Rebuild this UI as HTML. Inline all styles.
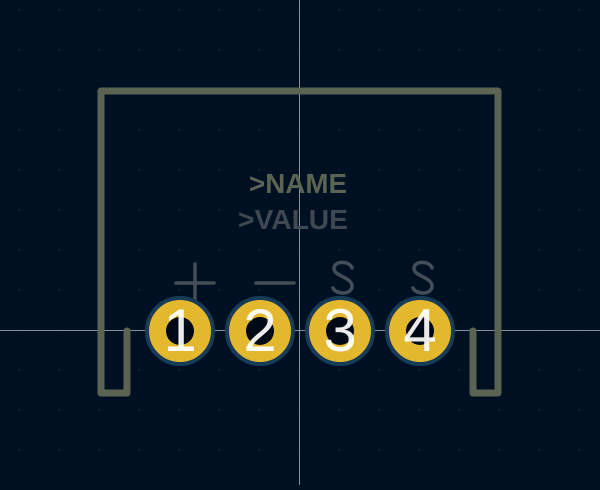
<!DOCTYPE html>
<html><head><style>html,body{margin:0;padding:0;background:#001023;overflow:hidden}</style></head>
<body>
<svg width="600" height="485" viewBox="0 0 600 485" xmlns="http://www.w3.org/2000/svg">
<defs>
<pattern id="g" x="0" y="0" width="40" height="40" patternUnits="userSpaceOnUse">
<rect x="18.5" y="9.5" width="1.2" height="1.2" fill="#2a3a4e"/>
</pattern>
</defs>
<rect width="600" height="485" fill="#001023"/>
<rect width="600" height="485" fill="url(#g)"/>
<line x1="299.5" y1="0" x2="299.5" y2="485" stroke="#8a909a" stroke-width="1"/>
<line x1="0" y1="330.5" x2="600" y2="330.5" stroke="#8a909a" stroke-width="1"/>
<g fill="none" stroke="#5b6352" stroke-width="7" stroke-linecap="round" stroke-linejoin="round">
<path d="M127 331 V393 H101 V91 H498 V393 H473 V331"/>
</g>
<g font-family="Liberation Sans, sans-serif" font-weight="bold" text-anchor="middle">
<text x="298" y="193" font-size="28" fill="#5b6352" textLength="98" lengthAdjust="spacingAndGlyphs">&gt;NAME</text>
<text x="293" y="229" font-size="28" fill="#3f4753" textLength="110" lengthAdjust="spacingAndGlyphs">&gt;VALUE</text>
</g>
<g stroke="#454d59" stroke-width="3.5" fill="none" stroke-linecap="round">
<path d="M176 283 H214 M195 264 V302"/>
<path d="M256 283 H294"/>
<path d="M352 268 C350 261 335 260 334 268 C333 276 352 277 352 286 C352 295 336 295 333 288"/>
<path d="M432 268 C430 261 415 260 414 268 C413 276 432 277 432 286 C432 295 416 295 413 288"/>
</g>
<g>
<g fill="#e3b82e" stroke="#183b58" stroke-width="4">
<circle cx="180" cy="331" r="33"/><circle cx="260" cy="331" r="33"/><circle cx="340" cy="331" r="33"/><circle cx="420" cy="331" r="33"/>
</g>
<g fill="#000a16">
<circle cx="180" cy="331" r="14"/><circle cx="260" cy="331" r="14"/><circle cx="340" cy="331" r="14"/><circle cx="420" cy="331" r="14"/>
</g>
</g>
<g font-family="Liberation Sans, sans-serif" font-size="60" fill="#ffffff" fill-opacity="0.92" text-anchor="middle">
<text x="180" y="351">1</text><text x="260" y="351">2</text><text x="340" y="351">3</text><text x="420" y="351">4</text>
</g>
</svg>
</body></html>
